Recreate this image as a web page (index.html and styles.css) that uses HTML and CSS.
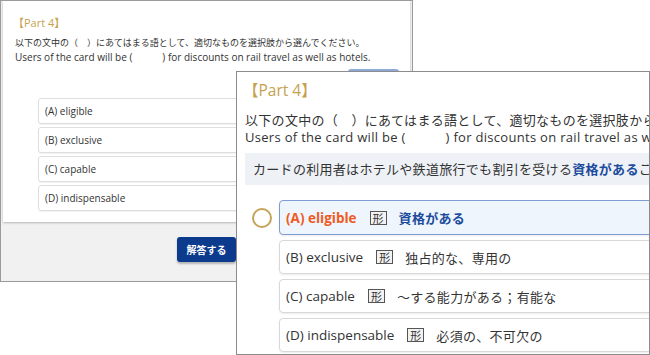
FILE: index.html
```html
<!DOCTYPE html>
<html lang="ja">
  <head>
    <title>Part 4</title>
    <meta charset="utf-8">
    <!-- CSS -->
    <link rel="stylesheet" href="styles.css">
  </head>
  <body>
    <div class="stage">

      <!-- back window: the quiz page -->
      <div class="window back">
        <div class="card">
          <p class="part">【Part 4】</p>
          <p class="lead">以下の文中の（　）にあてはまる語として、適切なものを選択肢から選んでください。<br><span class="en">Users of the card will be (　　　) for discounts on rail travel as well as hotels.</span></p>
          <div class="hintRow"><span class="hint"></span></div>
          <ul class="choices">
            <li>(A) eligible</li>
            <li>(B) exclusive</li>
            <li>(C) capable</li>
            <li>(D) indispensable</li>
          </ul>
        </div>
        <div class="footer">
          <button type="button" class="answer">解答する</button>
        </div>
      </div>

      <!-- front window: the explanation, zoomed -->
      <div class="window front">
        <p class="part">【Part 4】</p>
        <p class="lead">以下の文中の（　）にあてはまる語として、適切なものを選択肢から選んでください。<br>Users of the card will be (　　　) for discounts on rail travel as well as hotels.</p>
        <div class="translation">カードの利用者はホテルや鉄道旅行でも割引を受ける<b>資格がある</b>ことになります。</div>
        <ul class="answers">
          <li class="correct"><span class="mark"></span><div class="box"><span class="word">(A) eligible</span><span class="tag">形</span><span class="meaning">資格がある</span></div></li>
          <li><span class="mark"></span><div class="box"><span class="word">(B) exclusive</span><span class="tag">形</span><span class="meaning">独占的な、専用の</span></div></li>
          <li><span class="mark"></span><div class="box"><span class="word">(C) capable</span><span class="tag">形</span><span class="meaning">～する能力がある；有能な</span></div></li>
          <li><span class="mark"></span><div class="box"><span class="word">(D) indispensable</span><span class="tag">形</span><span class="meaning">必須の、不可欠の</span></div></li>
        </ul>
      </div>

    </div>
  </body>
</html>
```

FILE: styles.css
```css
html, body{
  margin: 0;
  padding: 0;
  background-color: white;
}
body{
  font-family: "Open Sans", "Noto Sans CJK JP", sans-serif;
  color: #333333;
}
p, ul{
  margin: 0;
  padding: 0;
}
ul{
  list-style: none;
}
.stage{
  position: relative;
  width: 650px;
  height: 355px;
  overflow: hidden;
}
.window{
  position: absolute;
  box-sizing: border-box;
  border: 1px solid #9a9a9a;
  background-color: white;
  overflow: hidden;
}

/* back window */
.back{
  left: 0;
  top: 0;
  width: 413px;
  height: 282px;
  background-color: #f1f1f1;
}
.back .card{
  background-color: white;
  margin: 0 2px;
  padding: 15px 10px 12px 12px;
  height: 221px;
  box-sizing: border-box;
  box-shadow: 0 1px 2px rgba(0,0,0,0.25);
}
.back .part{
  font-size: 11px;
  line-height: 14px;
  color: #c6a24f;
  margin-left: -2px;
}
.back .lead{
  margin-top: 6px;
  font-size: 9px;
  line-height: 14px;
  white-space: nowrap;
}
.back .en{
  font-size: 10px;
}
.hintRow{
  display: flex;
  justify-content: flex-end;
  margin-top: 4px;
  padding-right: 1px;
}
.hint{
  width: 51px;
  height: 22px;
  border-radius: 3px;
  background-color: #8fa9d6;
}
.choices{
  margin: 7px 24px 0 23px;
  display: flex;
  flex-direction: column;
  gap: 3px;
}
.choices li{
  height: 26px;
  box-sizing: border-box;
  border: 1px solid #dedede;
  border-radius: 3px;
  box-shadow: 0 1px 1px rgba(0,0,0,0.06);
  padding-left: 6px;
  font-size: 10px;
  display: flex;
  align-items: center;
}
.footer{
  display: flex;
  justify-content: center;
  padding-top: 15px;
}
.answer{
  width: 59px;
  height: 25px;
  border: none;
  border-radius: 3px;
  background-color: #0c3a8d;
  color: white;
  font-family: "Noto Sans CJK JP", sans-serif;
  font-weight: bold;
  font-size: 10px;
  box-shadow: 0 2px 2px rgba(0,0,0,0.25);
  padding: 0;
}

/* front window */
.front{
  left: 236px;
  top: 71px;
  width: 414px;
  height: 284px;
  border-color: #8c8c8c;
  padding: 8px 0 0 8px;
}
.front .part{
  font-size: 15.5px;
  line-height: 20px;
  color: #c6a24f;
  margin-left: -2px;
}
.front .lead{
  margin-top: 12px;
  font-size: 13px;
  line-height: 17px;
  letter-spacing: 0.3px;
  white-space: nowrap;
}
.translation{
  margin-top: 7px;
  height: 32px;
  background-color: #eef1f6;
  padding-left: 8px;
  font-size: 13px;
  line-height: 32px;
  letter-spacing: 0.3px;
  white-space: nowrap;
}
.translation b{
  color: #1b4b9c;
}
.answers{
  margin-top: 15px;
  display: flex;
  flex-direction: column;
  gap: 5px;
}
.answers li{
  display: flex;
  align-items: center;
}
.mark{
  width: 20px;
  height: 20px;
  flex: none;
  box-sizing: border-box;
  border-radius: 50%;
  margin: 0 7px 0 7px;
}
.correct .mark{
  border: 2px solid #c4a45a;
}
.box{
  flex: none;
  width: 420px;
  height: 34px;
  box-sizing: border-box;
  border: 1px solid #d8d8d8;
  border-radius: 4px;
  box-shadow: 0 1px 2px rgba(0,0,0,0.08);
  padding-left: 6px;
  display: flex;
  align-items: center;
  font-size: 13.5px;
  white-space: nowrap;
}
.correct .box{
  height: 35px;
  border: 1.5px solid #7d9cd3;
  background-color: #eef5fd;
}
.correct .word{
  color: #f05a22;
  font-weight: bold;
}
.tag{
  font-family: "Noto Sans CJK JP", sans-serif;
  font-size: 11px;
  line-height: 12px;
  padding: 0 2px;
  border: 1px solid #555555;
  background-color: #f2f2f2;
  margin: 0 12px 0 13px;
}
.meaning{
  font-family: "Noto Sans CJK JP", sans-serif;
  font-size: 13px;
  letter-spacing: 0.3px;
}
.correct .meaning{
  color: #1b4b9c;
  font-weight: bold;
}
```
